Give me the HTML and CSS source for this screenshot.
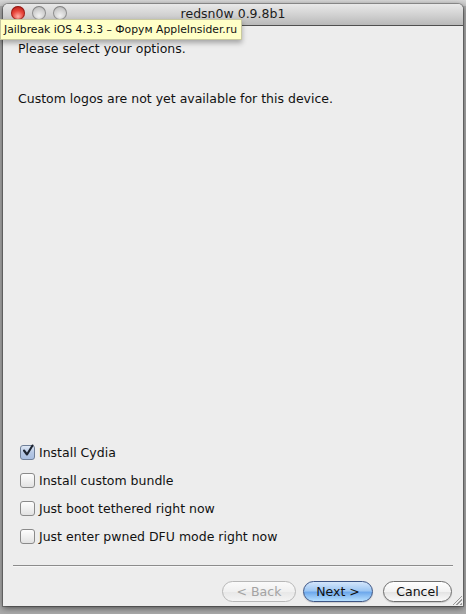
FILE: index.html
```html
<!DOCTYPE html>
<html lang="en">
<head>
    <meta charset="UTF-8">
    <title>redsn0w 0.9.8b1</title>
    <link rel="stylesheet" href="styles.css">
</head>
<body>
<div class="desktop">
    <div class="window">
        <div class="titlebar">
            <div class="lights">
                <span class="light close"></span>
                <span class="light"></span>
                <span class="light"></span>
            </div>
            <div class="title">redsn0w 0.9.8b1</div>
        </div>

        <div class="content">
            <p class="intro">Please select your options.</p>
            <p class="note">Custom logos are not yet available for this device.</p>

            <div class="options">
                <label class="option">
                    <span class="box checked">
                        <svg width="14" height="14" viewBox="0 0 14 14"><path d="M3 6.5 L6 10.5 L11.5 1.5" fill="none" stroke="#1d2430" stroke-width="2.1" stroke-linecap="round" stroke-linejoin="round"/></svg>
                    </span>
                    Install Cydia
                </label>
                <label class="option"><span class="box"></span>Install custom bundle</label>
                <label class="option"><span class="box"></span>Just boot tethered right now</label>
                <label class="option"><span class="box"></span>Just enter pwned DFU mode right now</label>
            </div>

            <div class="separator"></div>

            <div class="buttons">
                <button class="btn back">&lt; Back</button>
                <button class="btn primary">Next &gt;</button>
                <button class="btn cancel">Cancel</button>
            </div>
            <div class="grip"></div>
        </div>
    </div>

    <!-- hover tooltip from the browser tab behind -->
    <div class="tooltip">Jailbreak iOS 4.3.3 – Форум AppleInsider.ru</div>
</div>
</body>
</html>
```

FILE: styles.css
```css
html, body {
    margin: 0;
    padding: 0;
}
body {
    width: 466px;
    height: 614px;
    overflow: hidden;
    background: #b4b4b4;
    font-family: "DejaVu Sans", "Noto Sans", sans-serif;
}
.desktop {
    position: relative;
    width: 466px;
    height: 614px;
    background: linear-gradient(#d6d6d6, #c4c4c4 6px, #a9a9a9 6px);
}
.window {
    position: absolute;
    left: 3px;
    top: 4px;
    width: 460px;
    height: 602px;
    border-radius: 5px 5px 0 0;
    background: #ededed;
    box-shadow: 0 2px 6px rgba(0,0,0,0.55), 0 0 0 1px rgba(0,0,0,0.25);
    display: flex;
    flex-direction: column;
    overflow: hidden;
}
.titlebar {
    height: 21px;
    flex: none;
    position: relative;
    background: linear-gradient(#e9e9e9, #d2d2d2 50%, #b9b9b9);
    border-bottom: 1px solid #4f4f4f;
    border-radius: 5px 5px 0 0;
}
.lights {
    display: flex;
    gap: 7px;
    padding: 2px 0 0 8px;
}
.light {
    width: 14px;
    height: 14px;
    border-radius: 50%;
    background: radial-gradient(circle at 50% 70%, #f2f2f2, #c9c9c9 60%, #a5a5a5);
    box-shadow: inset 0 0 0 1px rgba(0,0,0,0.3);
}
.light.close {
    background: radial-gradient(circle at 50% 75%, #ffb0a8, #e8443a 45%, #a4130c);
    box-shadow: inset 0 0 0 1px rgba(90,0,0,0.45);
}
.title {
    position: absolute;
    left: 0;
    right: 0;
    top: 2px;
    text-align: center;
    font-size: 12.5px;
    color: #1c1c1c;
}
.content {
    flex: 1;
    display: flex;
    flex-direction: column;
    padding: 0 10px 0 15px;
    position: relative;
}
.intro, .note {
    margin: 0;
    font-size: 12.5px;
    color: #111;
}
.intro {
    margin-top: 15px;
}
.note {
    margin-top: 35px;
}
.options {
    margin-top: auto;
    display: flex;
    flex-direction: column;
    gap: 12px;
    padding-left: 2px;
}
.option {
    display: flex;
    align-items: center;
    gap: 4px;
    height: 16px;
    font-size: 12.5px;
    color: #111;
}
.box {
    width: 13px;
    height: 13px;
    border: 1px solid #8a8a8a;
    border-radius: 3px;
    background: linear-gradient(#fdfdfd, #f0f0f0 50%, #e2e2e2);
    position: relative;
}
.box.checked {
    background: linear-gradient(#dfe8f5, #b6c8e4 50%, #a8bee0);
    border-color: #6f7f98;
}
.box svg {
    position: absolute;
    left: 0;
    top: -2px;
}
.separator {
    margin: 21px 0 0 -5px;
    height: 1px;
    background: #8c8c8c;
    border-bottom: 1px solid #f7f7f7;
}
.buttons {
    display: flex;
    justify-content: flex-end;
    gap: 8px;
    padding: 14px 1px 4px 0;
}
.btn {
    height: 21px;
    padding: 0;
    white-space: nowrap;
    border-radius: 11px;
    border: 1px solid #6e6e6e;
    background: linear-gradient(#ffffff, #f2f2f2 50%, #e4e4e4 55%, #fafafa);
    font-family: "DejaVu Sans", sans-serif;
    font-size: 12.5px;
    color: #111;
    box-shadow: 0 1px 1px rgba(0,0,0,0.15);
}
.btn.back {
    width: 74px;
    margin-right: -1px;
    color: #a3a3a3;
    border-color: #b7b7b7;
    background: linear-gradient(#fafafa, #f0f0f0 50%, #e8e8e8 55%, #f4f4f4);
    box-shadow: none;
}
.btn.primary {
    width: 70px;
    margin-right: 2px;
    border-color: #3d5584;
    background: linear-gradient(#d4e6fb, #9ec7f3 45%, #6fa9ec 55%, #b7e0ff);
}
.btn.cancel {
    width: 69px;
}
.grip {
    position: absolute;
    right: 1px;
    bottom: 1px;
    width: 9px;
    height: 9px;
    background: linear-gradient(135deg, transparent 45%, #999 45%, #999 52%, transparent 52%, transparent 66%, #999 66%, #999 73%, transparent 73%, transparent 86%, #999 86%);
}
.tooltip {
    position: absolute;
    left: 0;
    top: 19px;
    height: 19px;
    line-height: 19px;
    padding: 0 4px 0 3px;
    background: #ffffc7;
    border: 1px solid #c8c8a0;
    font-family: "DejaVu Sans", sans-serif;
    font-size: 10.8px;
    color: #111;
    box-shadow: 0 3px 5px rgba(0,0,0,0.3);
}
```
